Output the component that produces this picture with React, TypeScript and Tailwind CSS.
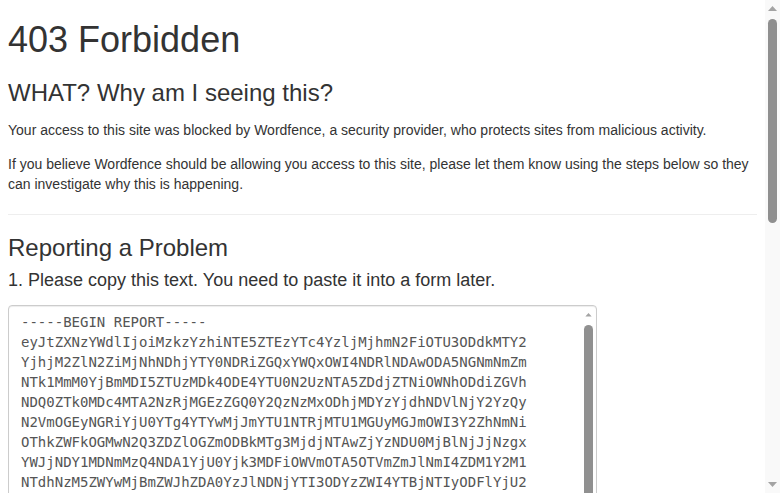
import React from "react";

const REPORT = [
  "-----BEGIN REPORT-----",
  "eyJtZXNzYWdlIjoiMzkzYzhiNTE5ZTEzYTc4YzljMjhmN2FiOTU3ODdkMTY2",
  "YjhjM2ZlN2ZiMjNhNDhjYTY0NDRiZGQxYWQxOWI4NDRlNDAwODA5NGNmNmZm",
  "NTk1MmM0YjBmMDI5ZTUzMDk4ODE4YTU0N2UzNTA5ZDdjZTNiOWNhODdiZGVh",
  "NDQ0ZTk0MDc4MTA2NzRjMGEzZGQ0Y2QzNzMxODhjMDYzYjdhNDVlNjY2YzQy",
  "N2VmOGEyNGRiYjU0YTg4YTYwMjJmYTU1NTRjMTU1MGUyMGJmOWI3Y2ZhNmNi",
  "OThkZWFkOGMwN2Q3ZDZlOGZmODBkMTg3MjdjNTAwZjYzNDU0MjBlNjJjNzgx",
  "YWJjNDY1MDNmMzQ4NDA1YjU0Yjk3MDFiOWVmOTA5OTVmZmJlNmI4ZDM1Y2M1",
  "NTdhNzM5ZWYwMjBmZWJhZDA0YzJlNDNjYTI3ODYzZWI4YTBjNTIyODFlYjU2",
];

function Arrow({ up }: { up: boolean }) {
  return (
    <svg width="9" height="5" viewBox="0 0 9 5" className="block">
      {up ? <path d="M0 5 L4.5 0 L9 5 Z" fill="#a3a3a3" /> : <path d="M0 0 L4.5 5 L9 0 Z" fill="#a3a3a3" />}
    </svg>
  );
}

export default function App() {
  return (
    <div className="flex h-[493px] overflow-hidden bg-white">
      <div
        className="min-w-0 flex-1 overflow-hidden px-2 text-[14px] leading-5 text-[#333]"
        style={{ fontFamily: '"Liberation Sans", Arial, Helvetica, sans-serif' }}
      >
        <h1 className="mt-5 mb-2.5 text-[36px] leading-[1.1] font-normal">403 Forbidden</h1>
        <h3 className="mt-5 mb-2.5 text-[24px] leading-[1.1] font-normal">WHAT? Why am I seeing this?</h3>
        <p className="my-[14px]">
          Your access to this site was blocked by Wordfence, a security provider, who protects sites from malicious activity.
        </p>
        <p className="my-[14px]">
          If you believe Wordfence should be allowing you access to this site, please let them know using the steps below so they can investigate why this is happening.
        </p>
        <hr className="my-5 border-0 border-t border-[#eee]" />
        <h3 className="mt-5 mb-2.5 text-[24px] leading-[1.1] font-normal">Reporting a Problem</h3>
        <h4 className="mt-2.5 mb-2.5 text-[18px] leading-[1.1] font-normal">
          1. Please copy this text. You need to paste it into a form later.
        </h4>
        <div className="pt-1">
          <div className="flex h-[300px] w-[589px] overflow-hidden rounded border border-[#ccc] bg-white shadow-[inset_0_1px_1px_rgba(0,0,0,0.075)]">
            <div
              className="min-w-0 flex-1 whitespace-pre px-3 py-1.5 text-[14px] leading-5 text-[#555]"
              style={{ fontFamily: '"DejaVu Sans Mono", monospace' }}
            >
              {REPORT.map((l, i) => (
                <div key={i}>{l}</div>
              ))}
            </div>
            <div className="flex w-[15px] flex-col items-center pt-[7px]">
              <Arrow up />
              <div className="mt-[8px] h-[400px] w-[9px] rounded-full bg-[#909090]" />
            </div>
          </div>
        </div>
      </div>
      <div className="flex w-[15px] flex-col items-center justify-between bg-[#f9f9f9] py-[6px]">
        <div className="flex flex-col items-center">
          <Arrow up />
          <div className="mt-[8px] h-[204px] w-[9px] rounded-full bg-[#8f8f8f]" />
        </div>
        <Arrow up={false} />
      </div>
    </div>
  );
}
